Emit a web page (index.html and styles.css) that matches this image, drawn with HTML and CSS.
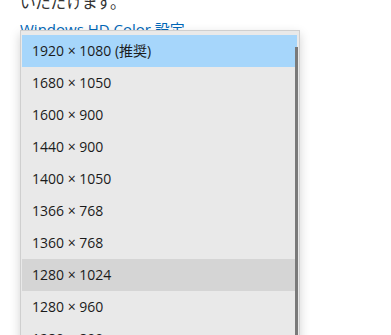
FILE: index.html
```html
<!DOCTYPE html>
<html lang="ja">
<head>
    <meta charset="UTF-8">
    <title>ディスプレイの解像度</title>
    <link rel="stylesheet" href="styles.css">
</head>
<body>

<div class="page">
    <p class="note">いただけます。</p>
    <a href="#" class="link">Windows HD Color 設定</a>

    <!-- Resolution dropdown (open) -->
    <div class="popup">
        <ul class="options">
            <li class="option selected">1920 × 1080 (推奨)</li>
            <li class="option">1680 × 1050</li>
            <li class="option">1600 × 900</li>
            <li class="option">1440 × 900</li>
            <li class="option">1400 × 1050</li>
            <li class="option">1366 × 768</li>
            <li class="option">1360 × 768</li>
            <li class="option hover">1280 × 1024</li>
            <li class="option">1280 × 960</li>
            <li class="option">1280 × 800</li>
        </ul>
        <div class="scrollbar"></div>
    </div>
</div>

</body>
</html>
```

FILE: styles.css
```css
body {
    font-family: 'Segoe UI', 'Open Sans', 'Noto Sans CJK JP', sans-serif;
    background-color: #ffffff;
    margin: 0;
    padding: 0;
    overflow: hidden;
}
.page {
    position: relative;
    display: flow-root;
    height: 335px;
    padding-left: 20px;
}
.note {
    margin: -8px 0 0 0;
    font-size: 16px;
    line-height: 20px;
    color: #333333;
    font-feature-settings: "palt";
}
.link {
    display: inline-block;
    margin-top: 7px;
    font-size: 15px;
    line-height: 20px;
    color: #0067b8;
    text-decoration: none;
}
.popup {
    position: absolute;
    left: 20px;
    top: 30px;
    width: 278px;
    height: 330px;
    background-color: #e9e9e9;
    border: 1px solid #cfcfcf;
    box-shadow: 0 4px 10px rgba(0,0,0,0.18);
}
.options {
    list-style: none;
    margin: 0;
    padding: 4px 2px 0 1px;
}
.option {
    height: 32px;
    line-height: 32px;
    padding-left: 10px;
    font-size: 14px;
    color: #1b1b1b;
}
.option.selected {
    background-color: #a6d6fb;
}
.option.hover {
    background-color: #d5d5d5;
}
.scrollbar {
    position: absolute;
    right: 1px;
    top: 16px;
    bottom: 0;
    width: 3px;
    background-color: #7a7a7a;
}
```
